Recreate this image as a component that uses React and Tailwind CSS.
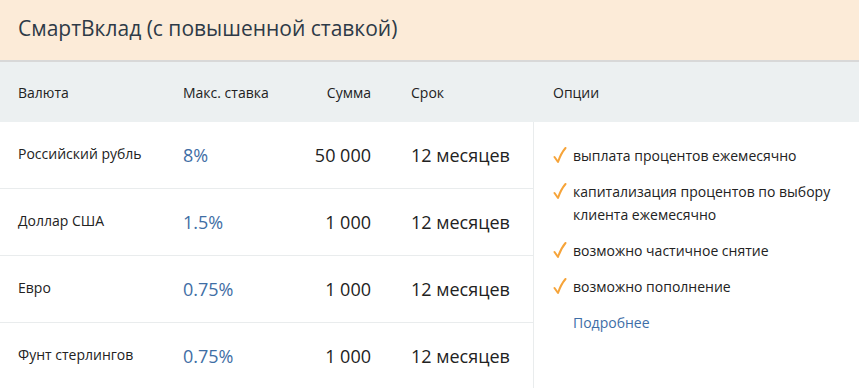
// SmartVklad rates table
const rows = [
  { currency: "Российский рубль", rate: "8%", sum: "50 000", term: "12 месяцев" },
  { currency: "Доллар США", rate: "1.5%", sum: "1 000", term: "12 месяцев" },
  { currency: "Евро", rate: "0.75%", sum: "1 000", term: "12 месяцев" },
  { currency: "Фунт стерлингов", rate: "0.75%", sum: "1 000", term: "12 месяцев" },
];

const options = [
  "выплата процентов ежемесячно",
  "капитализация процентов по выбору клиента ежемесячно",
  "возможно частичное снятие",
  "возможно пополнение",
];

const Check = () => (
  <svg width="14" height="17" viewBox="0 0 14 17" className="shrink-0 mt-[3px]">
    <path d="M1.5 10 L5 15 C7 9 9.5 4.5 12.5 1" fill="none" stroke="#f6a43a" strokeWidth="2" strokeLinecap="round" strokeLinejoin="round" />
  </svg>
);

const App = () => {
  return (
    <div className="w-[859px] h-[388px] bg-white overflow-hidden font-['Open_Sans','Noto_Sans',sans-serif] text-[#222]">
      <div className="h-[62px] bg-[#fcebd8] border-b-2 border-[#d8d8d8] flex items-center px-[18px]">
        <h1 className="text-[21px] text-[#2e3a47] -mt-[2px]">СмартВклад (с повышенной ставкой)</h1>
      </div>

      <div className="h-[60px] bg-[#ecf0f1] flex items-center text-[14px] text-[#222]">
        <div className="w-[183px] pl-[18px]">Валюта</div>
        <div className="w-[128px]">Макс. ставка</div>
        <div className="w-[60px] text-right">Сумма</div>
        <div className="w-[162px] pl-[40px]">Срок</div>
        <div className="pl-[20px]">Опции</div>
      </div>

      <div className="flex">
        <div className="w-[533px]">
          {rows.map((r, i) => (
            <div key={i} className={`h-[67px] flex items-center ${i < rows.length - 1 ? "border-b border-[#e9eced]" : ""}`}>
              <div className="w-[183px] pl-[18px] text-[14px] -mt-[4px]">{r.currency}</div>
              <div className="w-[128px] text-[18px] text-[#3f6ea5]">{r.rate}</div>
              <div className="w-[60px] text-right text-[18px] whitespace-nowrap">{r.sum}</div>
              <div className="pl-[40px] text-[18px] whitespace-nowrap">{r.term}</div>
            </div>
          ))}
        </div>
        <div className="flex-1 border-l border-[#e9eced] pl-[19px] pt-[22px] flex flex-col gap-[13px] text-[14px] leading-[23px]">
          {options.map((o, i) => (
            <div key={i} className="flex gap-[6px] pr-[20px]">
              <Check />
              <span>{o}</span>
            </div>
          ))}
          <a href="#" className="pl-[20px] text-[#3e6ea7]">Подробнее</a>
        </div>
      </div>
    </div>
  );
};

export default App;
